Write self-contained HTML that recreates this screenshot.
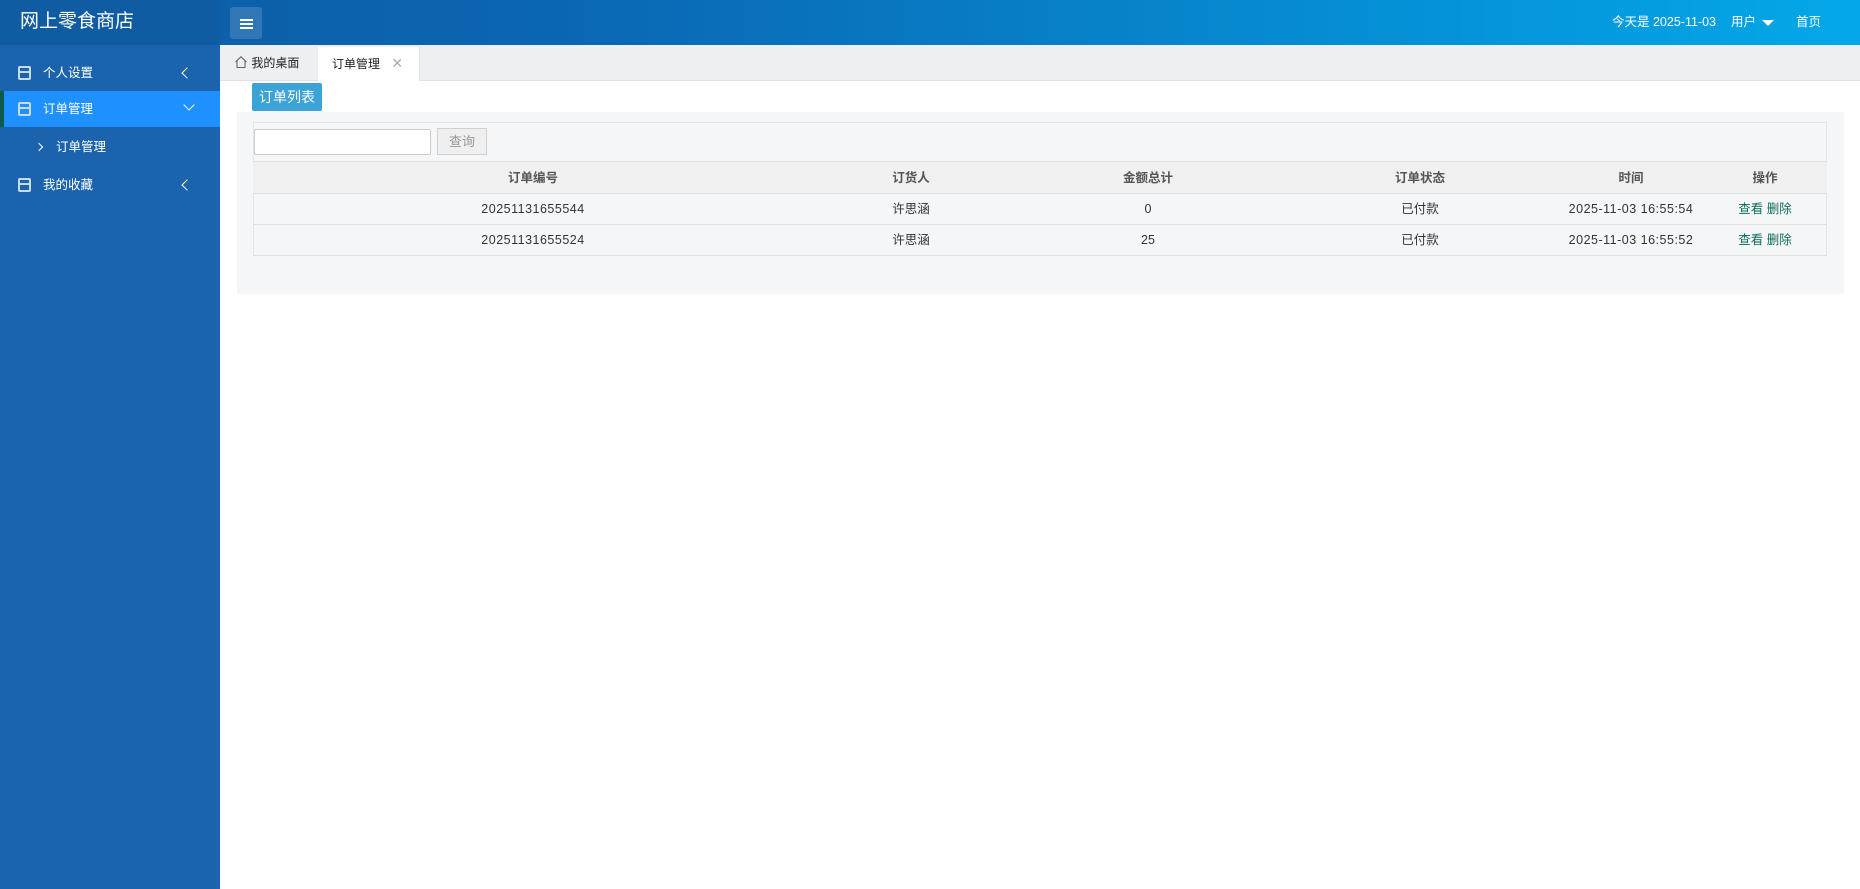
<!DOCTYPE html>
<html><head><meta charset="utf-8"><style>
*{margin:0;padding:0;box-sizing:border-box}
body{width:1860px;height:889px;overflow:hidden;background:#fff;font-family:"Liberation Sans","Noto Sans CJK SC",sans-serif;font-size:13px;color:#333;position:relative}
.hd{position:absolute;left:0;top:0;width:1860px;height:45px;background:linear-gradient(90deg,#0e5ba3 0%,#0b66b2 30%,#0590d6 75%,#04a8e8 100%)}
.logo{position:absolute;left:0;top:0;width:220px;height:45px;background:#0f5ca2;color:#fff;font-size:19px;line-height:43px;padding-left:20px}
.hb{position:absolute;left:230px;top:7px;width:32px;height:32px;background:rgba(255,255,255,.15);border-radius:3px}
.hb i{position:absolute;left:10px;width:13px;height:1.5px;background:#fff}
.hr{position:absolute;top:0;height:45px;line-height:44px;color:#fff;font-size:12.5px}
.sb{position:absolute;left:0;top:45px;width:220px;height:844px;background:#1b64ad}
.it{position:absolute;left:0;width:220px;height:36px;line-height:36px;color:#fff;font-size:12.5px;padding-left:43px}
.it .ic{position:absolute;left:18px;top:11px;width:13px;height:14px;border:2px solid #c9d9ee;border-radius:2px}
.it .ic:after{content:"";position:absolute;left:0;right:0;top:3px;height:2px;background:#c9d9ee}
.it .ar{position:absolute;left:183px;top:14px;width:8px;height:8px;border-left:1.5px solid #fff;border-bottom:1.5px solid #fff;transform:rotate(45deg)}
.tabs{position:absolute;left:220px;top:45px;width:1640px;height:36px;background:#eeeff1;border-bottom:1px solid #e2e2e2}
.tab{position:absolute;top:2px;height:34px;line-height:33px;font-size:12px;color:#222}
.btn1{position:absolute;left:252px;top:83px;width:70px;height:28px;background:#3ba3d6;color:#fff;font-size:14px;line-height:28px;text-align:center;border-radius:2px}
.panel{position:absolute;left:237px;top:112px;width:1607px;height:182px;background:#f5f6f8}
.box{position:absolute;left:253px;top:122px;width:1574px;height:134px;border:1px solid #e3e4e6;background:#f5f6f8}
.inp{position:absolute;left:254px;top:129px;width:177px;height:26px;background:#fff;border:1px solid #ccc;border-radius:2px}
.qb{position:absolute;left:437px;top:128px;width:50px;height:27px;background:#efefef;border:1px solid #d0d0d0;color:#999;font-size:13px;line-height:25px;text-align:center}
.row{position:absolute;left:253px;width:1574px;border-top:1px solid #e0e0e0}
.row span{position:absolute;top:0;transform:translateX(-50%);white-space:nowrap;font-size:12.5px}
.g{color:#0f6b5b}
</style></head><body>
<div class="hd"></div>
<div class="logo">网上零食商店</div>
<div class="hb"><i style="top:12px"></i><i style="top:16px"></i><i style="top:20px"></i></div>
<div class="hr" style="left:1612px">今天是 2025-11-03</div>
<div class="hr" style="left:1731px">用户 <span style="display:inline-block;width:0;height:0;border-left:6px solid transparent;border-right:6px solid transparent;border-top:6px solid #fff;vertical-align:middle;margin-left:3px"></span></div>
<div class="hr" style="left:1796px">首页</div>

<div class="sb">
<div class="it" style="top:10px"><span class="ic"></span>个人设置<span class="ar"></span></div>
<div class="it" style="top:46px;background:#1e90ff;border-left:4px solid #0d5a4a;padding-left:39px"><span class="ic" style="left:14px"></span>订单管理<span class="ar" style="transform:rotate(-45deg);top:10px;left:181px"></span></div>
<div class="it" style="top:84px;padding-left:56px"><span style="position:absolute;left:36px;top:15px;width:6px;height:6px;border-right:1.5px solid #fff;border-top:1.5px solid #fff;transform:rotate(45deg)"></span>订单管理</div>
<div class="it" style="top:122px"><span class="ic"></span>我的收藏<span class="ar"></span></div>
</div>

<div class="tabs">
<div class="tab" style="left:0;width:98px;padding-left:14px"><svg width="14" height="14" viewBox="0 0 14 14" style="vertical-align:-2px"><path d="M1.5 7 L7 1.8 L12.5 7 M3 5.8 V12.5 H11 V5.8" fill="none" stroke="#666" stroke-width="1.1"/></svg> 我的桌面</div>
<div class="tab" style="left:98px;width:102px;background:#fff;padding-left:14px;border-right:1px solid #e2e2e2">订单管理 <span style="color:#aaa;margin-left:8px;font-size:14px">✕</span></div>
</div>

<div class="btn1">订单列表</div>
<div class="panel"></div>
<div class="box"></div>
<div class="inp"></div>
<div class="qb">查询</div>
<div class="row" style="top:161px;height:32px;line-height:32px;background:#f0f0f0;font-weight:bold;color:#555"><span style="left:280px">订单编号</span><span style="left:658px">订货人</span><span style="left:895px">金额总计</span><span style="left:1167px">订单状态</span><span style="left:1378px">时间</span><span style="left:1512px">操作</span></div>
<div class="row" style="top:193px;height:31px;line-height:31px"><span style="left:280px;letter-spacing:.5px">20251131655544</span><span style="left:658px">许思涵</span><span style="left:895px">0</span><span style="left:1167px">已付款</span><span style="left:1378px;letter-spacing:.5px">2025-11-03 16:55:54</span><span style="left:1512px" class="g">查看 删除</span></div>
<div class="row" style="top:224px;height:32px;line-height:31px;border-bottom:1px solid #e0e0e0"><span style="left:280px;letter-spacing:.5px">20251131655524</span><span style="left:658px">许思涵</span><span style="left:895px">25</span><span style="left:1167px">已付款</span><span style="left:1378px;letter-spacing:.5px">2025-11-03 16:55:52</span><span style="left:1512px" class="g">查看 删除</span></div>
</body></html>
